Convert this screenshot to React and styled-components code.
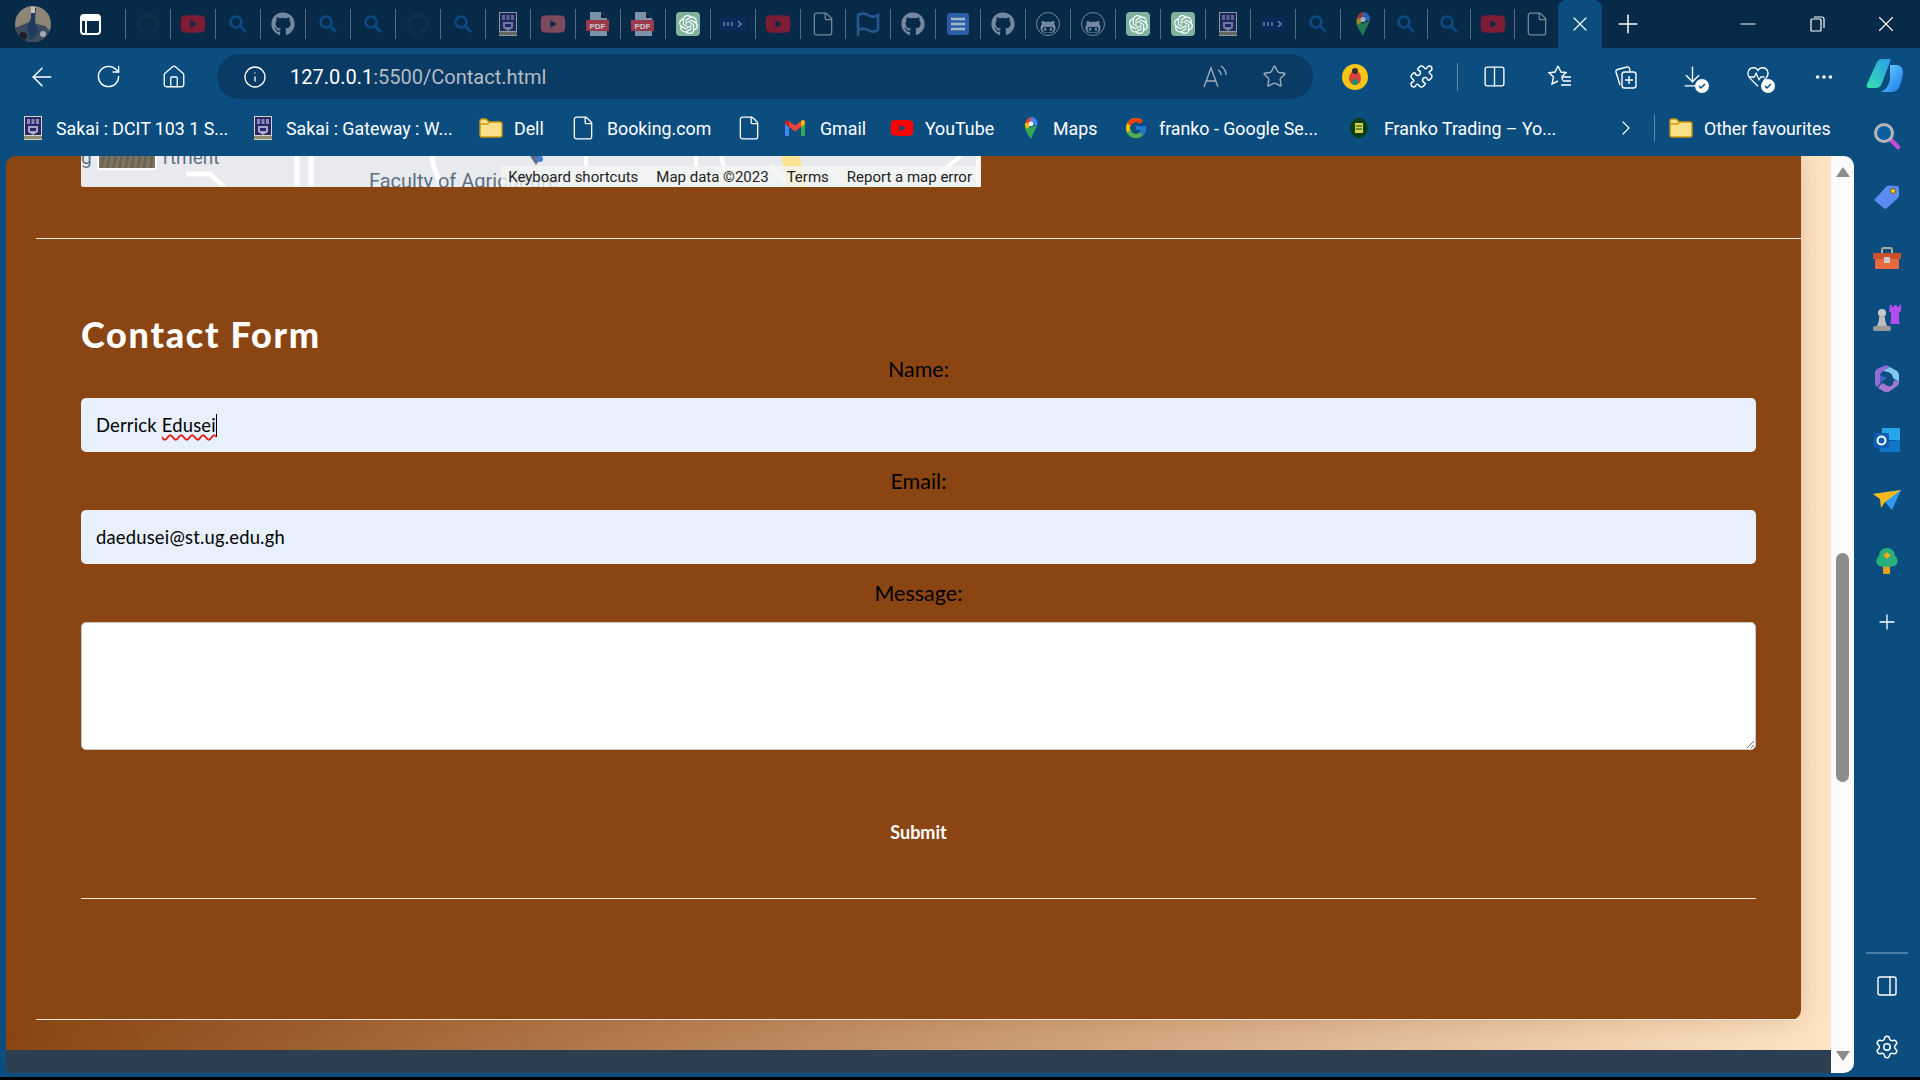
import React from 'react';
import styled, { createGlobalStyle } from 'styled-components';
import { ArrowLeft, RotateCw, Home, Info, Star, Puzzle, Columns2, Plus, X, Minus, ChevronRight, MoreHorizontal, Settings, File, ArrowDownToLine, PanelRight } from 'lucide-react';
import { FaGithub, FaGithubAlt, FaYoutube } from 'react-icons/fa';
import { FcGoogle } from 'react-icons/fc';
import { SiOpenai } from 'react-icons/si';

const GlobalStyle = createGlobalStyle`
    html, body { margin: 0; padding: 0; background: #000; overflow: hidden; }
    * { box-sizing: border-box; }
`;

const Crest = ({ size = 24 }) => (
    <svg width={size} height={size} viewBox="0 0 24 24">
        <rect x="3" y="0" width="18" height="24" fill="#d9d4c4" />
        <rect x="4" y="1" width="16" height="18" fill="#27286b" />
        <path d="M6 3h3v5H6zM10.5 3h3v5h-3zM15 3h3v5h-3z" fill="#8b87b8" />
        <path d="M7 10h10v6l-5 3-5-3z" fill="#a9a6c4" />
        <path d="M9 12h6v3H9z" fill="#27286b" />
        <path d="M3 20h18v3H3z" fill="#8f8b70" />
    </svg>
);

const Pdf = () => (
    <svg width="24" height="24" viewBox="0 0 24 24">
        <path d="M4 0h11l6 6v18H4z" fill="#7d93a8" />
        <path d="M15 0l6 6h-6z" fill="#0a2238" />
        <rect x="0" y="8" width="23" height="11" fill="#9c3a4c" />
        <text x="11.5" y="16.5" fontSize="8" fontWeight="700" textAnchor="middle" fill="#c9ccd2" fontFamily="Liberation Sans">PDF</text>
    </svg>
);

const Gpt = () => (
    <GptBox><SiOpenai size={19} color="#fff" /></GptBox>
);

const GithubRing = () => (
    <CircleHub><FaGithubAlt size={16} color="#7489a0" /></CircleHub>
);

const DotsTab = () => (
    <svg width="24" height="12" viewBox="0 0 24 12">
        <rect width="24" height="12" fill="#0a2a5e" />
        <path d="M3 4v4M7 4v4M11 4v4" stroke="#6d7f9e" strokeWidth="1.5" />
        <path d="M17 3l3 3-3 3" stroke="#6d7f9e" strokeWidth="1.5" fill="none" />
    </svg>
);

const BlueDoc = () => (
    <svg width="24" height="24" viewBox="0 0 24 24">
        <rect x="1" y="1" width="22" height="22" rx="3" fill="#2a5ea6" />
        <path d="M5 7h14M5 12h14M5 17h14" stroke="#a5b8d3" strokeWidth="2.4" />
    </svg>
);

const FlagTab = () => (
    <svg width="24" height="24" viewBox="0 0 24 24" fill="none" stroke="#23588f" strokeWidth="2.6">
        <path d="M2 24V3c4-2 7-2 10 0s7 2 10 0v15c-3 2-7 2-10 0s-6-2-10 0" />
    </svg>
);

const SearchTab = () => (
    <svg width="20" height="20" viewBox="0 0 20 20" fill="none" stroke="#0b4a82" strokeWidth="2.6">
        <circle cx="8" cy="8" r="5.5" />
        <path d="M12 12l6 6" />
    </svg>
);

const MapPin = ({ size = 24, dim }) => (
    <svg width={size} height={size} viewBox="0 0 24 24" opacity={dim ? 0.62 : 1}>
        <path d="M12 12l-6-5C3.5 12 8 18 12 24z" fill="#34a853" />
        <path d="M5.6 7.5C6.5 3 9.5 0 12 0v7z" fill="#ea4335" />
        <path d="M12 0c4 0 7 3 7 7 0 1-.3 2-.7 3L12 7z" fill="#4285f4" />
        <path d="M5.5 7C5.3 9 6 11 7 13l5-4-3-3z" fill="#fbbc04" />
        <path d="M18.5 9c-1 4-4 8-6.5 15V11z" fill="#34a853" />
        <circle cx="12" cy="7.5" r="2.6" fill="#fff" />
    </svg>
);

const GmailIcon = () => (
    <svg width="24" height="16" viewBox="0 0 24 16">
        <path d="M0 3v12a1 1 0 001 1h3V7z" fill="#4285f4" />
        <path d="M20 3v12a1 1 0 01-1 1h-3V7z" fill="#34a853" />
        <path d="M16 1v6l4-3V2c0-1.5-2-2.5-3-1.5z" fill="#fbbc04" />
        <path d="M4 7V1l6 4.5L16 1v6l-6 4.5z" fill="#ea4335" />
        <path d="M0 2v2l4 3V1C3-.2 0 .5 0 2z" fill="#c5221f" />
    </svg>
);

const FolderIcon = () => (
    <svg width="24" height="20" viewBox="0 0 24 20">
        <path d="M1 3a2 2 0 012-2h4l3 3h11a2 2 0 012 2v11a2 2 0 01-2 2H3a2 2 0 01-2-2z" fill="#fbe08a" stroke="#c9980f" strokeWidth="1.4" />
        <path d="M1.5 6h7L11 4" fill="none" stroke="#c9980f" strokeWidth="1.4" />
    </svg>
);

const FrankoIcon = () => (
    <svg width="24" height="20" viewBox="0 0 24 20">
        <ellipse cx="10" cy="10" rx="9" ry="10" fill="#0c3b17" />
        <rect x="6" y="5" width="8" height="10" fill="#d7d44a" />
        <path d="M7 8h6M7 11h6" stroke="#0c3b17" strokeWidth="1.2" />
    </svg>
);

const Ladybug = () => (
    <svg width="26" height="26" viewBox="0 0 26 26">
        <circle cx="13" cy="13" r="13" fill="#f5c518" />
        <ellipse cx="13" cy="14" rx="6" ry="7" fill="#d9433a" />
        <circle cx="13" cy="7" r="3" fill="#3a2b2b" />
        <circle cx="13" cy="18" r="3" fill="#1e8f6e" />
    </svg>
);

const ReadAloud = () => (
    <svg width="28" height="26" viewBox="0 0 28 26" fill="none" stroke="#9fb0bd" strokeWidth="1.3">
        <path d="M3 23L10 4l7 19M5.5 17h9" />
        <path d="M17 6c2 1 3 3 3 5M20 2c3 2 5 5 5 9" />
    </svg>
);

const FavList = () => (
    <svg width="26" height="26" viewBox="0 0 26 26" fill="none" stroke="#fff" strokeWidth="1.4">
        <path d="M11 2l3 6 5 .5-4 4 .5 4M11 2L8 8l-6 .7 4.5 4.3L5 20l6-3" />
        <path d="M16 13h8M16 17h8M14 21h10" />
    </svg>
);

const Collections = () => (
    <svg width="26" height="26" viewBox="0 0 26 26" fill="none" stroke="#fff" strokeWidth="1.4">
        <path d="M7 21L3 8a2 2 0 011.5-2.5L14 3a2 2 0 012.5 1.5L17 7" />
        <rect x="9" y="8" width="14" height="16" rx="2.5" />
        <path d="M16 12v8M12 16h8" />
    </svg>
);

const Check = () => (
    <svg width="14" height="14" viewBox="0 0 14 14">
        <circle cx="7" cy="7" r="7" fill="#fff" />
        <path d="M4 7l2 2 4-4" stroke="#0c4d7f" strokeWidth="1.5" fill="none" />
    </svg>
);

const HeartPulse = () => (
    <svg width="24" height="24" viewBox="0 0 26 26" fill="none" stroke="#fff" strokeWidth="1.4">
        <path d="M13 23L4 14C0 9 3 3 8 3c2 0 4 1 5 3 1-2 3-3 5-3 5 0 8 6 4 11l-3 3" />
        <path d="M3 13h6l2-4 3 7 2-3h4" />
    </svg>
);

const CopilotIcon = () => (
    <svg width="38" height="36" viewBox="0 0 38 36">
        <defs>
            <linearGradient id="cpa" x1="0" y1="1" x2="1" y2="0"><stop offset="0" stopColor="#35e0a8" /><stop offset="1" stopColor="#2a9df0" /></linearGradient>
            <linearGradient id="cpb" x1="0" y1="0" x2="1" y2="1"><stop offset="0" stopColor="#6fd8ff" /><stop offset="1" stopColor="#1a78ee" /></linearGradient>
        </defs>
        <path d="M24 6h7c3 0 6 3 6 7 0 3-1 8-3 13-1 4-4 7-8 7H14c6-1 9-8 10-12z" fill="url(#cpb)" />
        <path d="M11 3c1-2 3-3 5-3h9l-9 24c-1 3-3 5-6 5H3c-2 0-3-2-2-4z" fill="url(#cpa)" />
    </svg>
);

const RestoreIcon = () => (
    <svg width="15" height="16" viewBox="0 0 15 16" fill="none" stroke="#fff" strokeWidth="1.2">
        <rect x="1" y="3" width="10" height="12" rx="1" />
        <path d="M4 1h8a2 2 0 012 2v9" />
    </svg>
);

const sideIcons = [
    <svg width="28" height="28" viewBox="0 0 28 28">
        <path d="M17 17l8 8" stroke="#c24fd6" strokeWidth="4.5" strokeLinecap="round" />
        <circle cx="11" cy="11" r="8.5" fill="#0b5f9e" stroke="#b5b5b5" strokeWidth="3" />
    </svg>,
    <svg width="26" height="24" viewBox="0 0 26 24">
        <path d="M1 14L12 2c1-1 2-1.5 3-1.5L23 1c1.5 0 2 1 2 2v7c0 1.5-.5 2.5-1.5 3.5L13 23c-1 1-2.5 1-3.5 0L1 16c-.7-.7-.7-1.3 0-2z" fill="#5d8bf4" />
        <circle cx="19" cy="6" r="2.5" fill="#ffd21f" stroke="#6a5d10" strokeWidth="1" />
    </svg>,
    <svg width="28" height="22" viewBox="0 0 28 22">
        <path d="M9 6V3a2 2 0 012-2h6a2 2 0 012 2v3" fill="none" stroke="#a8a8a8" strokeWidth="2" />
        <rect x="0" y="6" width="28" height="6" fill="#c8502a" />
        <rect x="2" y="12" width="24" height="10" rx="1" fill="#e8693f" />
        <rect x="11" y="10" width="6" height="6" fill="#c9c9c9" />
    </svg>,
    <svg width="28" height="28" viewBox="0 0 28 28">
        <path d="M17 1h2v2h2V1h3v2h2V1h2v6l-2 2v8l1 3H17l1-3V9l-2-2z" fill="#b44df0" />
        <circle cx="9" cy="9" r="4" fill="#c9c9c9" />
        <path d="M6 13h6v3l2 6H4l2-6z" fill="#bdbdbd" />
        <rect x="0" y="22" width="18" height="5" rx="2" fill="#9a9a9a" />
    </svg>,
    <svg width="26" height="28" viewBox="0 0 26 28">
        <path d="M1 8c0-2 1-3 2-4l7-3c3-1 4 0 6 1l-7 4c-2 1-3 3-3 5v8l-3 3c-1-1-2-2-2-4z" fill="#8f6fd6" />
        <path d="M16 2l7 4c1 1 2 2 2 4v7l-6-4c0-3-2-5-5-6l-5-1z" fill="#7fc8ee" />
        <path d="M25 17c0 2-1 3-2 4l-7 5c-3 2-5 1-7 0l-5-3 4-5 6 3c2 1 4 0 5-2l1-4z" fill="#a678d6" />
        <path d="M6 10l7 3-7 5z" fill="#3f62c8" />
    </svg>,
    <svg width="26" height="24" viewBox="0 0 26 24">
        <rect x="8" y="0" width="18" height="12" fill="#2aa4e8" />
        <path d="M4 14l22-2v12H6z" fill="#0f78c9" />
        <rect x="0" y="5" width="15" height="15" rx="1.5" fill="#0a5fb4" />
        <circle cx="7.5" cy="12.5" r="4" fill="none" stroke="#fff" strokeWidth="2" />
    </svg>,
    <svg width="28" height="20" viewBox="0 0 28 20">
        <path d="M0 4l28-4-9 20-7-8z" fill="#2e9bf0" />
        <path d="M0 4l28-4-16 12-4 6-1-9z" fill="#f8b81c" />
    </svg>,
    <svg width="24" height="26" viewBox="0 0 24 26">
        <rect x="8" y="18" width="7" height="8" rx="1" fill="#e6a11c" />
        <path d="M12 0c5 0 8 4 8 8 3 2 4 7 0 10-2 1-14 1-16 0-4-3-3-8 0-10 0-4 3-8 8-8z" fill="#27b07a" />
        <path d="M12 4l2 2 2 1-2 2-2 2-2-2-2-2 2-1z" fill="#f2a81f" />
    </svg>,
];

const searchTab = <SearchTab />;
const hubLight = <FaGithub size={24} color="#7489a0" />;
const hubDark = <FaGithub size={24} color="#0f2f4b" />;
const ytDark = <FaYoutube size={26} color="#7c1d35" />;
const fileTab = <File size={26} color="#74889b" strokeWidth={1.2} />;
const crestTab = <svg width="24" height="24" viewBox="0 0 24 24" opacity="0.65"><Crest /></svg>;

const tabIcons = [
    [hubDark], [ytDark], [searchTab], [hubLight], [searchTab], [searchTab], [hubDark], [searchTab], [crestTab],
    [<FaYoutube size={26} color="#7c4a5c" />], [<Pdf />], [<Pdf />], [<Gpt />], [<DotsTab />], [ytDark],
    [fileTab], [<FlagTab />], [hubLight], [<BlueDoc />],
    [hubLight], [<GithubRing />], [<GithubRing />], [<Gpt />], [<Gpt />], [crestTab], [<DotsTab />], [searchTab],
    [<MapPin dim />, 44], [searchTab, 43], [searchTab, 43], [ytDark, 44], [fileTab, 44],
];

const fileMark = <File size={26} color="#fff" strokeWidth={1.2} />;

const bookmarks = [
    { label: 'Sakai : DCIT 103 1 S...', icon: <Crest />, w: 251, pad: 21 },
    { label: 'Sakai : Gateway : W...', icon: <Crest />, w: 228 },
    { label: 'Dell', icon: <FolderIcon />, w: 91 },
    { label: 'Booking.com', icon: fileMark, w: 166 },
    { label: '', icon: fileMark, w: 49 },
    { label: 'Gmail', icon: <GmailIcon />, w: 105 },
    { label: 'YouTube', icon: <FaYoutube size={24} color="#f00" />, w: 130 },
    { label: 'Maps', icon: <MapPin size={22} />, w: 104 },
    { label: 'franko - Google Se...', icon: <FcGoogle size={24} />, w: 225 },
    { label: 'Franko Trading – Yo...', icon: <FrankoIcon />, w: 265 },
];

const App = () => (
    <Screen>
        <GlobalStyle />
        <TabStrip>
            <Avatar>
                <svg width="36" height="36" viewBox="0 0 36 36">
                    <rect width="36" height="36" fill="#8d8578" />
                    <path d="M0 22l14-6 16 4 6 6v10H0z" fill="#3b4a5e" />
                    <path d="M16 0l5 2-1 12 3 14-8 6-3-12 4-10z" fill="#1e3a5c" />
                    <path d="M16 0l4 1v6h-4z" fill="#c9c3b5" />
                    <circle cx="8" cy="30" r="4" fill="#1a1f28" />
                    <circle cx="28" cy="28" r="3" fill="#a7adb3" />
                </svg>
            </Avatar>
            <TabsButton />
            {tabIcons.map(([icon, w], i) => <TabSlot key={i} $w={w}>{icon}</TabSlot>)}
            <ActiveTab><X size={24} color="#fff" strokeWidth={1.2} /></ActiveTab>
            <NewTab><Plus size={30} color="#fff" strokeWidth={1.2} /></NewTab>
            <WindowControls>
                <WinButton><Minus size={24} color="#fff" strokeWidth={1} /></WinButton>
                <WinButton><RestoreIcon /></WinButton>
                <WinButton><X size={26} color="#fff" strokeWidth={1} /></WinButton>
            </WindowControls>
        </TabStrip>

        <Toolbar>
            <NavButton><ArrowLeft size={30} color="#fff" strokeWidth={1.2} /></NavButton>
            <NavButton><RotateCw size={27} color="#fff" strokeWidth={1.2} /></NavButton>
            <NavButton><Home size={26} color="#fff" strokeWidth={1.2} /></NavButton>
            <AddressBar>
                <Info size={24} color="#fff" strokeWidth={1.3} />
                <Url>127.0.0.1<UrlRest>:5500/Contact.html</UrlRest></Url>
                <AddressEnd>
                    <ReadAloud />
                    <Star size={25} color="#9fb0bd" strokeWidth={1.3} />
                </AddressEnd>
            </AddressBar>
            <ToolGroup>
                <ToolButton><Ladybug /></ToolButton>
                <ToolButton><Puzzle size={25} color="#fff" strokeWidth={1.4} /></ToolButton>
                <ToolSeparator />
                <ToolButton><Columns2 size={25} color="#fff" strokeWidth={1.3} /></ToolButton>
                <ToolButton><FavList /></ToolButton>
                <ToolButton><Collections /></ToolButton>
                <ToolButton>
                    <ArrowDownToLine size={25} color="#fff" strokeWidth={1.3} />
                    <Badge><Check /></Badge>
                </ToolButton>
                <ToolButton>
                    <HeartPulse />
                    <Badge><Check /></Badge>
                </ToolButton>
                <ToolButton><MoreHorizontal size={22} color="#fff" strokeWidth={2} /></ToolButton>
                <ToolButton $last><CopilotIcon /></ToolButton>
            </ToolGroup>
        </Toolbar>

        <Body>
            <MainColumn>
                <BookmarkBar>
                    {bookmarks.map((b, i) => (
                        <Bookmark key={i} $w={b.w} $pad={b.pad}>
                            {b.icon}
                            {b.label && <span>{b.label}</span>}
                        </Bookmark>
                    ))}
                    <MoreBookmarks><ChevronRight size={26} color="#fff" strokeWidth={1.2} /></MoreBookmarks>
                    <BarSeparator />
                    <Bookmark $w={170}><FolderIcon /><span>Other favourites</span></Bookmark>
                </BookmarkBar>

                <Viewport>
                    <Page>
                        <Panel>
                            <MapStrip>
                                <svg width="900" height="31" viewBox="0 0 900 31">
                                    <path d="M216 0v31M230 0v31" stroke="#fff" strokeWidth="5" />
                                    <path d="M352 0c-2 10 4 16 8 31" stroke="#fff" strokeWidth="5" fill="none" />
                                    <path d="M105 18h24l14 13" stroke="#fff" strokeWidth="5" fill="none" />
                                    <path d="M505 0v31M615 0v31M640 0l8 31M690 10l20 21" stroke="#fff" strokeWidth="4" fill="none" />
                                    <path d="M700 0h18l10 31h-22z" fill="#fde293" />
                                    <path d="M880 0l-40 31M897 0v31" stroke="#fff" strokeWidth="4" />
                                    <path d="M449 0h12l-6 9z" fill="#5b7083" />
                                    <circle cx="459" cy="3" r="3" fill="#3b82d6" />
                                </svg>
                                <MapLabel>g</MapLabel>
                                <MapThumb />
                                <MapLabel $x={82}>rtment</MapLabel>
                                <MapPlace>Faculty of Agriculture</MapPlace>
                                <Attribution>
                                    <span>Keyboard shortcuts</span>
                                    <span>Map data ©2023</span>
                                    <span>Terms</span>
                                    <span>Report a map error</span>
                                </Attribution>
                            </MapStrip>
                            <PanelRule />
                            <ContactSection>
                                <Heading>Contact Form</Heading>
                                <FieldLabel>Name:</FieldLabel>
                                <FieldBox>Derrick <Misspelt>Edusei</Misspelt><Caret /></FieldBox>
                                <FieldLabel>Email:</FieldLabel>
                                <FieldBox>daedusei@st.ug.edu.gh</FieldBox>
                                <FieldLabel>Message:</FieldLabel>
                                <MessageBox />
                                <SubmitButton>Submit</SubmitButton>
                                <SectionRule />
                            </ContactSection>
                            <PanelEndRule />
                        </Panel>
                        <Footer />
                    </Page>
                    <Scrollbar>
                        <ArrowUp />
                        <Thumb />
                        <ArrowDown />
                    </Scrollbar>
                </Viewport>
            </MainColumn>

            <Sidebar>
                {sideIcons.map((icon, i) => <SideItem key={i}>{icon}</SideItem>)}
                <SideItem><Plus size={24} color="#fff" strokeWidth={1.3} /></SideItem>
                <SideDivider />
                <SideItem><PanelRight size={24} color="#fff" strokeWidth={1.4} /></SideItem>
                <SideItem><Settings size={26} color="#fff" strokeWidth={1.4} /></SideItem>
            </Sidebar>
        </Body>
    </Screen>
);

export default App;

const Screen = styled.div`
    width: 1920px;
    height: 1080px;
    background: #000;
    display: flex;
    flex-direction: column;
    overflow: hidden;
    font-family: Roboto, "Liberation Sans", sans-serif;
`;

const TabStrip = styled.div`
    height: 48px;
    flex: none;
    display: flex;
    align-items: center;
    background: #072a49;
    padding-left: 15px;
`;

const Avatar = styled.div`
    width: 36px;
    height: 36px;
    border-radius: 50%;
    overflow: hidden;
    flex: none;
`;

const TabsButton = styled.div`
    width: 21px;
    height: 21px;
    margin: 0 24px 0 29px;
    border: 2px solid #fff;
    border-radius: 4px;
    flex: none;
    background: linear-gradient(#fff 5px, transparent 5px);
    position: relative;

    &::after {
        content: '';
        position: absolute;
        left: 3px;
        top: 4px;
        bottom: 0;
        width: 1.5px;
        background: #fff;
    }
`;

const TabSlot = styled.div`
    width: ${(p) => p.$w || 45}px;
    height: 30px;
    flex: none;
    display: flex;
    align-items: center;
    justify-content: center;
    border-left: 1px solid #546e86;
`;

const GptBox = styled.div`
    width: 24px;
    height: 24px;
    border-radius: 4px;
    background: #7fb3a0;
    display: flex;
    align-items: center;
    justify-content: center;
`;

const CircleHub = styled.div`
    width: 24px;
    height: 24px;
    border-radius: 50%;
    border: 1px solid #7489a0;
    display: flex;
    align-items: flex-end;
    justify-content: center;
`;

const ActiveTab = styled.div`
    width: 44px;
    height: 48px;
    flex: none;
    background: #0c4d7f;
    border-radius: 8px 8px 0 0;
    display: flex;
    align-items: center;
    justify-content: center;
`;

const NewTab = styled.div`
    width: 52px;
    flex: none;
    display: flex;
    justify-content: center;
`;

const WindowControls = styled.div`
    margin-left: auto;
    display: flex;
    align-items: center;
    gap: 1px;
`;

const WinButton = styled.div`
    width: 68px;
    display: flex;
    justify-content: center;
`;

const Toolbar = styled.div`
    height: 57px;
    flex: none;
    display: flex;
    align-items: center;
    background: #0c4d7f;
    padding-left: 9px;
`;

const NavButton = styled.div`
    width: 66px;
    flex: none;
    display: flex;
    justify-content: center;
`;

const AddressBar = styled.div`
    width: 1096px;
    height: 45px;
    margin-left: 10px;
    flex: none;
    display: flex;
    align-items: center;
    gap: 23px;
    padding: 0 26px;
    background: #0a3b65;
    border-radius: 23px;
`;

const Url = styled.div`
    color: #fff;
    font-size: 20px;
    white-space: nowrap;
`;

const UrlRest = styled.span`
    color: #b4bcc4;
`;

const AddressEnd = styled.div`
    margin-left: auto;
    display: flex;
    align-items: center;
    gap: 33px;
`;

const ToolGroup = styled.div`
    margin-left: 9px;
    display: flex;
    align-items: center;
`;

const ToolButton = styled.div`
    width: ${(p) => (p.$last ? 56 : 66)}px;
    height: 40px;
    flex: none;
    display: flex;
    align-items: center;
    justify-content: center;
    position: relative;
`;

const Badge = styled.div`
    position: absolute;
    left: 36px;
    top: 22px;
    display: flex;
`;

const ToolSeparator = styled.div`
    width: 1px;
    height: 28px;
    margin: 0 3px;
    background: #5d87a8;
    flex: none;
`;

const Body = styled.div`
    height: 972px;
    flex: none;
    display: flex;
    background: #0c4d7f;
`;

const MainColumn = styled.div`
    width: 1854px;
    flex: none;
    display: flex;
    flex-direction: column;
`;

const BookmarkBar = styled.div`
    height: 51px;
    flex: none;
    display: flex;
    align-items: center;
    padding-bottom: 5px;
`;

const Bookmark = styled.div`
    width: ${(p) => p.$w}px;
    flex: none;
    display: flex;
    align-items: center;
    gap: 11px;
    padding-left: ${(p) => p.$pad || 0}px;
    color: #fff;
    font-size: 17.8px;
    white-space: nowrap;

    svg {
        flex: none;
    }
`;

const MoreBookmarks = styled.div`
    width: 24px;
    display: flex;
`;

const BarSeparator = styled.div`
    width: 1px;
    height: 28px;
    margin: 0 14px 0 16px;
    background: #5d87a8;
`;

const Viewport = styled.div`
    height: 917px;
    margin-left: 6px;
    display: flex;
    border-radius: 10px 10px 10px 8px;
    overflow: hidden;
`;

const Page = styled.div`
    flex: 1;
    display: flex;
    flex-direction: column;
    background: linear-gradient(to right, #8b4513, #ffe4c4);
`;

const Panel = styled.div`
    width: 1795px;
    height: 864px;
    flex: none;
    display: flex;
    flex-direction: column;
    padding-left: 30px;
    background: #8b4513;
    border-radius: 0 0 10px 0;
    box-shadow: 0 0 24px rgba(139, 69, 19, 0.22);
`;

const MapStrip = styled.div`
    width: 900px;
    height: 31px;
    flex: none;
    margin-left: 45px;
    background: #e8eaed;
    position: relative;
    overflow: hidden;
    border-radius: 0 0 0 2px;
`;

const MapLabel = styled.span`
    position: absolute;
    left: ${(p) => p.$x || 0}px;
    top: -10px;
    font-size: 19px;
    line-height: 24px;
    color: #5b7083;
`;

const MapThumb = styled.div`
    position: absolute;
    left: 16px;
    top: -20px;
    width: 60px;
    height: 34px;
    background: repeating-linear-gradient(100deg, #6d6352 0 3px, #7d7462 3px 6px);
    border: 2px solid #fff;
    border-radius: 2px;
`;

const MapPlace = styled.span`
    position: absolute;
    left: 288px;
    top: 13px;
    font-size: 20px;
    line-height: 24px;
    color: #5b7083;
    white-space: nowrap;
`;

const Attribution = styled.div`
    position: absolute;
    right: 0;
    bottom: 0;
    width: 480px;
    height: 21px;
    display: flex;
    align-items: center;
    justify-content: flex-end;
    gap: 18px;
    padding-right: 9px;
    background: rgba(245, 245, 245, 0.78);
    font-size: 15px;
    color: #222;
    white-space: nowrap;
`;

const PanelRule = styled.div`
    height: 1px;
    flex: none;
    margin-top: 51px;
    background: #f5ebe0;
`;

const PanelEndRule = styled.div`
    height: 1px;
    flex: none;
    margin-top: auto;
    background: #f5ebe0;
`;

const ContactSection = styled.form`
    padding: 75px 45px 0;
    font-family: Lato, "Open Sans", sans-serif;
`;

const Heading = styled.h2`
    margin: 0;
    font-size: 36px;
    line-height: 40px;
    font-weight: 900;
    letter-spacing: 1.7px;
    color: #fff;
`;

const FieldLabel = styled.label`
    display: block;
    margin: 14px 0 15px;
    padding-top: 1px;
    text-align: center;
    font-size: 21.5px;
    line-height: 28px;
    color: #000;

    h2 + & {
        margin-top: 0;
    }
`;

const FieldBox = styled.div`
    height: 54px;
    display: flex;
    align-items: center;
    padding: 0 15px;
    background: #e8f0fe;
    border-radius: 5px;
    font-size: 18.4px;
    letter-spacing: 0.2px;
    color: #000;
    white-space: pre;
`;

const Misspelt = styled.span`
    text-decoration: underline wavy #e0201c 1.5px;
    text-underline-offset: 2px;
`;

const Caret = styled.span`
    width: 1px;
    height: 23px;
    background: #000;
`;

const MessageBox = styled.textarea`
    display: block;
    width: 100%;
    height: 128px;
    background: #fff;
    border: 1px solid #c8c8c8;
    border-radius: 5px;
    resize: vertical;
    outline: none;
`;

const SubmitButton = styled.button`
    display: block;
    width: 100%;
    height: 40px;
    margin-top: 62px;
    padding: 0;
    background: transparent;
    border: none;
    font-family: inherit;
    font-size: 18px;
    font-weight: 700;
    color: #fff;
`;

const SectionRule = styled.div`
    height: 1px;
    margin-top: 46px;
    background: #f5ebe0;
`;

const Footer = styled.div`
    height: 23px;
    margin-top: auto;
    flex: none;
    background: #2c3e50;
`;

const Scrollbar = styled.div`
    width: 23px;
    flex: none;
    display: flex;
    flex-direction: column;
    align-items: center;
    padding: 11px 0 12px;
    background: #fbfbfb;
`;

const ArrowUp = styled.div`
    width: 0;
    height: 0;
    border-left: 7px solid transparent;
    border-right: 7px solid transparent;
    border-bottom: 10px solid #8c8c8c;
`;

const ArrowDown = styled.div`
    width: 0;
    height: 0;
    margin-top: auto;
    border-left: 7px solid transparent;
    border-right: 7px solid transparent;
    border-top: 10px solid #8c8c8c;
`;

const Thumb = styled.div`
    width: 13px;
    height: 229px;
    margin-top: 376px;
    background: #8c8c8c;
    border-radius: 7px;
`;

const Sidebar = styled.div`
    width: 66px;
    flex: none;
    display: flex;
    flex-direction: column;
    padding-top: 1px;
`;

const SideItem = styled.div`
    height: 60.7px;
    flex: none;
    display: flex;
    align-items: center;
    justify-content: center;
`;

const SideDivider = styled.div`
    height: 2px;
    margin: auto 12px 2px;
    background: #4f7ea3;
    flex: none;
`;
